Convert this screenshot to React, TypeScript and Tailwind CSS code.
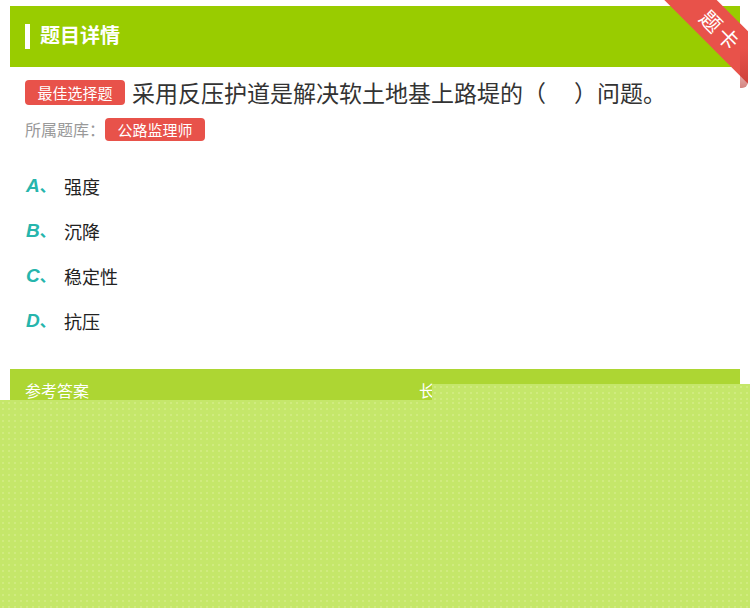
const options = [
  { key: 'A', text: '强度' },
  { key: 'B', text: '沉降' },
  { key: 'C', text: '稳定性' },
  { key: 'D', text: '抗压' },
];

const cjk = "font-['Noto_Sans_CJK_SC','Noto_Sans',sans-serif]";

function Ribbon() {
  return (
    <div className="absolute top-0 right-[2px] w-[90px] h-[88px] overflow-hidden rounded-br-[6px]">
      <div className="absolute left-[-37px] top-[12px] w-[200px] h-[37px] rotate-45 bg-[#e8524a] flex items-center justify-center">
        <span className={`${cjk} text-white text-[21px] tracking-[3px] leading-none`}>题卡</span>
      </div>
      <div className="absolute right-0 bottom-0 w-[8px] h-[40px] bg-gradient-to-b from-transparent to-[#b8322c] opacity-60" />
    </div>
  );
}

export default function App() {
  return (
    <div className={`relative w-[750px] h-[608px] bg-white overflow-hidden ${cjk}`}>
      {/* header */}
      <div className="mx-[10px] mt-[6px] h-[61px] bg-[#99cc00] flex items-center pl-[15px] pb-[3px]">
        <div className="w-[5px] h-[25px] bg-white mt-[3px]" />
        <h2 className="ml-[10px] text-white text-[20px] font-bold">题目详情</h2>
      </div>
      <Ribbon />

      {/* question */}
      <div className="px-[25px] pt-[10px]">
        <div className="flex items-center">
          <span className="w-[100px] h-[25px] rounded-[4px] bg-[#e8524a] text-white text-[15px] leading-[25px] text-center">最佳选择题</span>
          <p className="ml-[7px] text-[23px] text-[#333] leading-[30px]">
            采用反压护道是解决软土地基上路堤的（<span className="inline-block w-[28px]" />）问题。
          </p>
        </div>
        <div className="mt-[10px] flex items-center">
          <span className="text-[16px] text-[#999]">所属题库：</span>
          <span className="w-[100px] h-[23px] rounded-[4px] bg-[#e8524a] text-white text-[15px] leading-[23px] text-center">公路监理师</span>
        </div>

        <ul className="mt-[30px] flex flex-col gap-[15px]">
          {options.map((o) => (
            <li key={o.key} className="flex items-center h-[30px]">
              <span className="w-[39px] pl-px text-[#26b5ac] text-[19px] font-bold italic font-['Liberation_Sans','Noto_Sans_CJK_SC',sans-serif]">
                {o.key}
                <span className="not-italic text-[16px]">、</span>
              </span>
              <span className="text-[18px] text-[#222]">{o.text}</span>
            </li>
          ))}
        </ul>
      </div>

      {/* answer */}
      <div className="mx-[10px] mt-[33px] h-[60px] bg-[#add633] flex items-start justify-between px-[15px] pt-[9px]">
        <span className="text-white text-[16px]">参考答案</span>
        <span className="mr-[290px] text-white text-[16px]">长</span>
      </div>

      {/* covering layer */}
      <div className="absolute left-0 right-0 top-[400px] bottom-0 bg-[#c5e76a] bg-[radial-gradient(circle,#d0ec80_0.7px,transparent_1px)] bg-[length:6px_6px]" />
      <div className="absolute left-[432px] right-0 top-[384px] h-[16px] bg-[#c5e76a] bg-[radial-gradient(circle,#d0ec80_0.7px,transparent_1px)] bg-[length:6px_6px]" />
    </div>
  );
}
